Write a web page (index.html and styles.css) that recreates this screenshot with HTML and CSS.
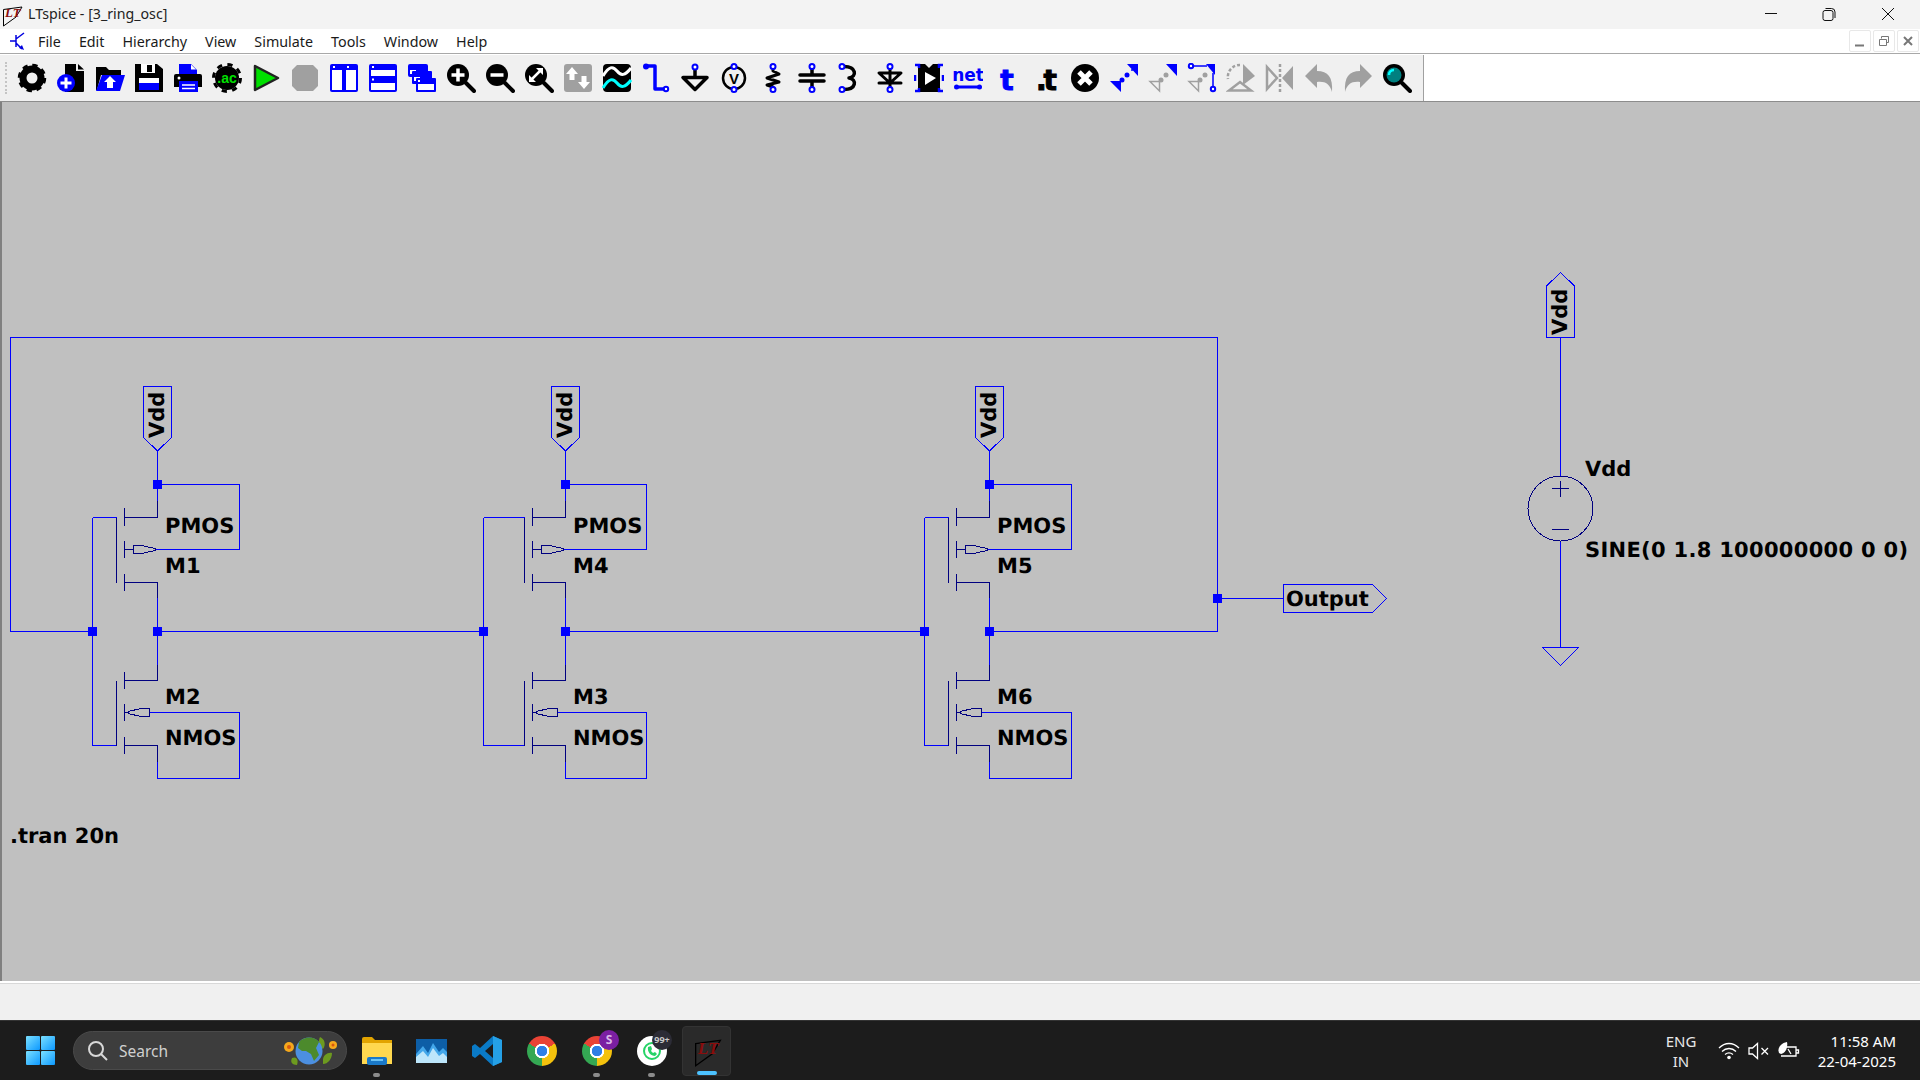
FILE: index.html
```html
<!DOCTYPE html>
<html lang="en">
<head>
    <meta charset="UTF-8">
    <title>LTspice - [3_ring_osc]</title>
    <link rel="stylesheet" href="styles.css">
</head>
<body>
    <header class="titlebar">
        <svg class="app-logo" width="22" height="24" viewBox="0 0 22 24">
            <path class="logo-line" d="M2.5 6.5L21 4L15 14L2.5 23Z"/>
            <text class="logo-text" x="4" y="14">LT</text>
        </svg>
        <span class="title-text">LTspice - [3_ring_osc]</span>
        <div class="window-btns">
            <svg width="58" height="29" viewBox="0 0 58 29"><path class="win-line" d="M22 13.500H34"/></svg>
            <svg width="58" height="29" viewBox="0 0 58 29"><path class="win-line" d="M22 12.500a2 2 0 0 1 2-2h6a2 2 0 0 1 2 2v6a2 2 0 0 1-2 2h-6a2 2 0 0 1-2-2ZM24.500 8.500h6a3.500 3.500 0 0 1 3.500 3.500v6"/></svg>
            <svg width="58" height="29" viewBox="0 0 58 29"><path class="win-line" d="M23 8L35 20M35 8L23 20"/></svg>
        </div>
    </header>

    <nav class="menubar">
        <svg class="menu-icon" width="18" height="20" viewBox="0 0 18 20">
            <path class="menu-icon-line" d="M1 10H7M7 4V16M7 8L15 2M7 12L13 18"/>
            <path class="menu-icon-arrow" d="M15 19L10 17L13 14Z"/>
        </svg>
        <a href="#">File</a>
        <a href="#">Edit</a>
        <a href="#">Hierarchy</a>
        <a href="#">View</a>
        <a href="#">Simulate</a>
        <a href="#">Tools</a>
        <a href="#">Window</a>
        <a href="#">Help</a>
        <div class="mdi-btns">
            <button class="mdi-btn"><svg width="12" height="12" viewBox="0 0 12 12"><path class="mdi-line" d="M1 10.500H10"/></svg></button>
            <button class="mdi-btn"><svg width="12" height="12" viewBox="0 0 12 12"><path class="mdi-line-thin" d="M3.500 3.500V1.500H10.500V7.500H8.500M1.500 4.500H8.500V10.500H1.500Z"/></svg></button>
            <button class="mdi-btn"><svg width="12" height="12" viewBox="0 0 12 12"><path class="mdi-line" d="M2 2L10 10M10 2L2 10"/></svg></button>
        </div>
    </nav>

    <div class="toolbar-row">
        <div class="toolbar">
            <div class="grip"></div>
            <!-- settings -->
            <div class="tool"><svg viewBox="0 0 30 30"><circle cx="15" cy="15" r="9" class="k-ring" stroke-width="7"/><circle cx="15" cy="15" r="12.500" class="k-ring" stroke-width="3.500" stroke-dasharray="5.200 4.600"/></svg></div>
            <!-- new schematic -->
            <div class="tool"><svg viewBox="0 0 30 30"><path d="M9 1H20V8H28V28a1 1 0 0 1-1 1H9Z"/><path d="M22 1L28 6.500H22Z"/><circle cx="10" cy="20" r="9" class="b"/><path class="w-line" stroke-width="3" d="M10 14.500V25.500M4.500 20H15.500"/></svg></div>
            <!-- open -->
            <div class="tool"><svg viewBox="0 0 30 30"><path d="M1 27V4H11L14 7H26V12H6L2 27Z"/><path class="b" d="M7 12H30L25 28H1Z"/><path class="w" d="M15 13L21 19H18V25H12V19H9Z"/></svg></div>
            <!-- save -->
            <div class="tool"><svg viewBox="0 0 30 30"><path d="M1 1H23L29 6V29H1Z"/><rect class="w" x="7" y="1" width="14" height="9"/><rect x="13" y="2" width="5" height="7"/><rect class="w" x="5" y="15" width="20" height="5"/><rect class="b" x="5" y="20" width="20" height="7"/></svg></div>
            <!-- print -->
            <div class="tool"><svg viewBox="0 0 30 30"><path class="b" d="M6 1H18L24 7V12H6Z"/><path class="w" d="M18 1.500L23 6.500H18Z"/><path d="M3 11H27a2 2 0 0 1 2 2V24H1V13a2 2 0 0 1 2-2Z"/><circle class="w" cx="6" cy="15" r="1.500"/><rect class="b" x="6" y="18" width="19" height="11"/><path class="w-line" stroke-width="1.500" d="M9 22H22M9 25.500H22"/></svg></div>
            <!-- ac analysis -->
            <div class="tool"><svg viewBox="0 0 30 30"><circle cx="15" cy="15" r="12"/><circle cx="15" cy="15" r="13.500" class="k-ring" stroke-width="3" stroke-dasharray="5.200 5.400"/><text class="ac-text" x="15" y="20">.ac</text></svg></div>
            <!-- run -->
            <div class="tool"><svg viewBox="0 0 30 30"><path class="run" d="M4 3L27 15L4 27Z"/></svg></div>
            <!-- halt -->
            <div class="tool"><svg viewBox="0 0 30 30"><path class="g" d="M7 2H23L28 7V23L23 28H7L2 23V7Z"/></svg></div>
            <!-- tile vertically -->
            <div class="tool"><svg viewBox="0 0 30 30"><rect class="b" x="1" y="1" width="28" height="28" rx="2"/><rect class="w" x="3" y="7" width="10" height="20"/><rect class="w" x="17" y="7" width="10" height="20"/><rect class="w" x="4" y="3" width="2" height="2"/><rect class="w" x="18" y="3" width="2" height="2"/></svg></div>
            <!-- tile horizontally -->
            <div class="tool"><svg viewBox="0 0 30 30"><rect class="b" x="1" y="1" width="28" height="28" rx="2"/><rect class="w" x="3" y="7" width="24" height="6"/><rect class="w" x="3" y="20" width="24" height="7"/><rect class="w" x="4" y="3" width="2" height="2"/><rect class="w" x="4" y="15.500" width="2" height="2"/></svg></div>
            <!-- cascade -->
            <div class="tool"><svg viewBox="0 0 30 30"><rect class="b" x="1" y="1" width="20" height="13" rx="2"/><rect class="w" x="3" y="7" width="6" height="4"/><rect class="b" x="5" y="8" width="20" height="13" rx="1"/><rect class="w" x="7" y="14" width="6" height="4"/><rect class="b" x="9" y="15" width="20" height="14" rx="1"/><rect class="w" x="11" y="21" width="16" height="6"/><rect class="w" x="11" y="17" width="2" height="2"/></svg></div>
            <!-- zoom in -->
            <div class="tool"><svg viewBox="0 0 30 30"><path class="k-line" stroke-width="4" d="M20 20L28 28"/><circle cx="12" cy="12" r="11"/><path class="w-line" stroke-width="3.500" d="M12 5.500V18.500M5.500 12H18.500"/></svg></div>
            <!-- zoom out -->
            <div class="tool"><svg viewBox="0 0 30 30"><path class="k-line" stroke-width="4" d="M20 20L28 28"/><circle cx="12" cy="12" r="11"/><path class="w-line" stroke-width="3.500" d="M5.500 12H18.500"/></svg></div>
            <!-- zoom fit -->
            <div class="tool"><svg viewBox="0 0 30 30"><path class="k-line" stroke-width="4" d="M20 20L28 28"/><circle cx="12" cy="12" r="11"/><path class="w-line" stroke-width="2.500" d="M7.500 16.500L16.500 7.500"/><path class="w" d="M12 5H19V12ZM5 12V19H12Z"/></svg></div>
            <!-- pan -->
            <div class="tool"><svg viewBox="0 0 30 30"><rect class="g" x="1" y="1" width="28" height="28" rx="3"/><path class="w" d="M9 4L15 11H11.500V17H6.500V11H3ZM21 26L15 19H18.500V13H23.500V19H27Z"/></svg></div>
            <!-- waveform -->
            <div class="tool"><svg viewBox="0 0 30 30"><rect x="1" y="1" width="28" height="28" rx="4"/><path class="wave-w" d="M1 13C7 3 11 3 15 8S23 13 29 5"/><path class="wave-c" d="M1 25C7 15 11 15 15 20S23 25 29 17"/></svg></div>
            <!-- wire -->
            <div class="tool"><svg viewBox="0 0 30 30"><path class="b-line" stroke-width="3.500" d="M6 3H14V26H24"/><circle class="b" cx="5" cy="3.500" r="3"/><circle class="pin" cx="25" cy="26" r="2.200"/></svg></div>
            <!-- ground -->
            <div class="tool"><svg viewBox="0 0 30 30"><path class="k-line" stroke-width="3.500" d="M15 6V14M3 14.500H27L15 26.500Z"/><circle class="pin" cx="15" cy="4" r="2.500"/></svg></div>
            <!-- label -->
            <div class="tool"><svg viewBox="0 0 30 30"><circle class="k-ring" stroke-width="2.500" cx="15" cy="15" r="11"/><text class="v-text" x="15" y="21">V</text><circle class="pin" cx="15" cy="3.500" r="2.500"/><circle class="pin" cx="15" cy="26.500" r="2.500"/></svg></div>
            <!-- resistor -->
            <div class="tool"><svg viewBox="0 0 30 30"><path class="k-line" stroke-width="3" d="M15 6V8L21 11L9 15L21 19L9 22L15 24"/><circle class="pin" cx="15" cy="3.500" r="2.500"/><circle class="pin" cx="15" cy="26.500" r="2.500"/></svg></div>
            <!-- capacitor -->
            <div class="tool"><svg viewBox="0 0 30 30"><path class="k-line" stroke-width="3.500" d="M15 6V12M15 18V24M3 12H27M3 18H27"/><circle class="pin" cx="15" cy="3.500" r="2.500"/><circle class="pin" cx="15" cy="26.500" r="2.500"/></svg></div>
            <!-- inductor -->
            <div class="tool"><svg viewBox="0 0 30 30"><path class="k-line" stroke-width="3.500" d="M7 3.500C21 3 21 14 13 15C21 16 21 27 7 26.500"/><circle class="pin" cx="6" cy="3.500" r="2.500"/><circle class="pin" cx="6" cy="26.500" r="2.500"/></svg></div>
            <!-- diode -->
            <div class="tool"><svg viewBox="0 0 30 30"><path class="k-line" stroke-width="3" d="M15 6V24M4 10H26L15 20ZM4 20H26"/><circle class="pin" cx="15" cy="3.500" r="2.500"/><circle class="pin" cx="15" cy="26.500" r="2.500"/></svg></div>
            <!-- component -->
            <div class="tool"><svg viewBox="0 0 30 30"><path d="M4 1H11L15 5L19 1H26V29H4Z"/><path class="w" d="M11 9L22 15L11 22Z"/><path class="dash" d="M1 2H5V5M29 2H25V5M1 12V18M29 12V18M1 28H5V25M29 28H25V25"/></svg></div>
            <!-- net name -->
            <div class="tool"><svg viewBox="0 0 30 30"><text class="net-text" x="15" y="18">net</text><path class="b-line" stroke-width="3" d="M3 24H27"/><circle class="b" cx="3.500" cy="24" r="2.500"/><circle class="b" cx="26.500" cy="24" r="2.500"/></svg></div>
            <!-- text -->
            <div class="tool"><svg class="tool-text" viewBox="0 0 30 30"><text class="t-text t-blue" x="15" y="27">t</text></svg></div>
            <!-- spice directive -->
            <div class="tool"><svg class="tool-text" viewBox="0 0 30 30"><text class="t-text t-dot" x="14" y="27">.t</text></svg></div>
            <!-- delete -->
            <div class="tool"><svg viewBox="0 0 30 30"><circle cx="15" cy="15" r="14"/><path class="w-line" stroke-width="5" d="M9 9L21 21M21 9L9 21"/></svg></div>
            <!-- move -->
            <div class="tool"><svg viewBox="0 0 30 30"><path class="b" d="M18 1H29V13ZM1 18H12V29Z"/><circle class="b" cx="18" cy="12" r="2.500"/><circle class="b" cx="13" cy="17" r="2.500"/><circle class="b" cx="23" cy="7" r="1"/></svg></div>
            <!-- drag -->
            <div class="tool"><svg viewBox="0 0 30 30"><path class="b" d="M18 1H29V13Z"/><path class="g-line" d="M2 18.500H11.500V28Z"/><circle class="g" cx="18" cy="12" r="2.500"/><circle class="g" cx="13" cy="17" r="2.500"/></svg></div>
            <!-- drag with wire -->
            <div class="tool"><svg viewBox="0 0 30 30"><path class="b" d="M19 1H28V12Z"/><path class="b-line" stroke-width="1.500" d="M6 3H20M26 10V24"/><circle class="pin" cx="4" cy="3" r="2.200"/><circle class="pin" cx="26" cy="26" r="2.200"/><path class="g-line" d="M2 18.500H11.500V28Z"/><circle class="g" cx="18" cy="12" r="2.500"/><circle class="g" cx="13" cy="17" r="2.500"/></svg></div>
            <!-- rotate -->
            <div class="tool"><svg viewBox="0 0 30 30"><path class="g" d="M17 1L29 13L17 22Z"/><path class="g-dots" d="M14 2A12 12 0 0 0 2 16"/><path class="g-fat" d="M3 27.500H25L14 19Z"/></svg></div>
            <!-- mirror -->
            <div class="tool"><svg viewBox="0 0 30 30"><path class="g-fat" d="M2 4V26L12 15Z"/><path class="g" d="M28 3V27L17 15Z"/><path class="g-dots" d="M15 1V29"/></svg></div>
            <!-- undo -->
            <div class="tool"><svg viewBox="0 0 30 30"><path class="g" d="M13 1V8C24 8 29 14 28 29C26 21 21 18 13 19V25L1 13Z"/></svg></div>
            <!-- redo -->
            <div class="tool"><svg viewBox="0 0 30 30"><path class="g" d="M17 1V8C6 8 1 14 2 29C4 21 9 18 17 19V25L29 13Z"/></svg></div>
            <!-- find -->
            <div class="tool"><svg viewBox="0 0 30 30"><path class="k-line" stroke-width="4" d="M20 20L28 28"/><circle cx="12" cy="12" r="11"/><circle cx="12" cy="12" r="7.500" class="teal"/><path class="cyan-line" d="M7 12C7 9 9 7 12 7"/></svg></div>
        </div>
    </div>

    <main class="canvas">
        <svg class="schematic" width="1918" height="879" viewBox="2 102 1918 879">
            <defs>
                <g id="pmos">
                    <path class="sym" d="M124.500 508V526M124.500 541V558M124.500 574V591M116.500 517.500V582.500M124.500 517.500H157.500V501M124.500 582.500H157.500V598M124.500 549.500H133.500"/>
                    <path class="sym" d="M133.500 545.500H141.500L155 548.500V550.500L141.500 553.500H133.500Z"/>
                </g>
                <g id="nmos">
                    <path class="sym" d="M124.500 672V689M124.500 704V721M124.500 737V754M116.500 680.500V745.500M124.500 680.500H157.500V664.500M124.500 745.500H157.500V761.500M124.500 712.500H128"/>
                    <path class="sym" d="M149.500 708.500H141L128 711.500V713.500L141 716.500H149.500Z"/>
                </g>
                <path id="vdd-pin" class="flag" d="M143.500 386.500H171.500V437.500L157.500 451L143.500 437.500Z"/>
                <rect id="dot" x="-4.500" y="-4.500" width="9" height="9"/>
            </defs>

            <!-- feedback loop and main net -->
            <path class="wire" d="M92.500 631.500H10.500V337.500H1217.500V631.500H989.500M924.500 631.500H565.500M483.500 631.500H157.500M1217.500 598.500H1283.500"/>

            <!-- M1 / M2 -->
            <path class="wire" d="M157.500 451V501M157.500 484.500H239.500V549.500H155M157.500 598V664.500M92.500 517.500V745.500H116.500M92.500 517.500H116.500M157.500 761.500V778.500H239.500V712.500H149.500"/>
            <use href="#vdd-pin"/><use href="#pmos"/><use href="#nmos"/>

            <!-- M4 / M3 -->
            <path class="wire" d="M565.500 451V501M565.500 484.500H646.500V549.500H563M565.500 598V664.500M483.500 517.500V745.500H524.500M483.500 517.500H524.500M565.500 761.500V778.500H646.500V712.500H557.500"/>
            <use href="#vdd-pin" x="408"/><use href="#pmos" x="408"/><use href="#nmos" x="408"/>

            <!-- M5 / M6 -->
            <path class="wire" d="M989.500 451V501M989.500 484.500H1071.500V549.500H987M989.500 598V664.500M924.500 517.500V745.500H948.500M924.500 517.500H948.500M989.500 761.500V778.500H1071.500V712.500H981.500"/>
            <use href="#vdd-pin" x="832"/><use href="#pmos" x="832"/><use href="#nmos" x="832"/>

            <!-- junctions -->
            <use class="dot" href="#dot" x="157.500" y="484.500"/>
            <use class="dot" href="#dot" x="92.500" y="631.500"/>
            <use class="dot" href="#dot" x="157.500" y="631.500"/>
            <use class="dot" href="#dot" x="565.500" y="484.500"/>
            <use class="dot" href="#dot" x="483.500" y="631.500"/>
            <use class="dot" href="#dot" x="565.500" y="631.500"/>
            <use class="dot" href="#dot" x="989.500" y="484.500"/>
            <use class="dot" href="#dot" x="924.500" y="631.500"/>
            <use class="dot" href="#dot" x="989.500" y="631.500"/>
            <use class="dot" href="#dot" x="1217.500" y="598.500"/>

            <!-- output flag -->
            <path class="flag" d="M1283.500 584.500H1372.500L1386.500 598.500L1372.500 612.500H1283.500Z"/>

            <!-- voltage source -->
            <path class="flag" d="M1546.500 337.500V286L1560.500 272.500L1574.500 286V337.500Z"/>
            <path class="wire" d="M1560.500 337.500V476M1560.500 541V647.500"/>
            <circle class="sym-blue" cx="1560.500" cy="508.500" r="32.500"/>
            <path class="sym-blue" d="M1552 488.500H1569M1560.500 480.500V497M1552 529.500H1569"/>
            <path class="flag" d="M1542.500 647.500H1578.500L1560.500 665.500Z"/>

            <!-- labels -->
            <text class="sch-text" x="165" y="532.500">PMOS</text>
            <text class="sch-text" x="165" y="572.500">M1</text>
            <text class="sch-text" x="165" y="704">M2</text>
            <text class="sch-text" x="165" y="745">NMOS</text>
            <text class="sch-text" x="573" y="532.500">PMOS</text>
            <text class="sch-text" x="573" y="572.500">M4</text>
            <text class="sch-text" x="573" y="704">M3</text>
            <text class="sch-text" x="573" y="745">NMOS</text>
            <text class="sch-text" x="997" y="532.500">PMOS</text>
            <text class="sch-text" x="997" y="572.500">M5</text>
            <text class="sch-text" x="997" y="704">M6</text>
            <text class="sch-text" x="997" y="745">NMOS</text>
            <text class="sch-text" transform="translate(164 438) rotate(-90)">Vdd</text>
            <text class="sch-text" transform="translate(572 438) rotate(-90)">Vdd</text>
            <text class="sch-text" transform="translate(996 438) rotate(-90)">Vdd</text>
            <text class="sch-text" transform="translate(1566.500 335) rotate(-90)">Vdd</text>
            <text class="sch-text" x="1286" y="606">Output</text>
            <text class="sch-text" x="1585" y="475.500">Vdd</text>
            <text class="sch-text sine-text" x="1585" y="557">SINE(0 1.8 100000000 0 0)</text>
            <text class="sch-text" x="10" y="843">.tran 20n</text>
        </svg>
    </main>

    <div class="statusbar"></div>

    <footer class="taskbar">
        <svg class="start" width="29" height="29" viewBox="0 0 29 29">
            <defs>
                <linearGradient id="win" x1="0" y1="0" x2="1" y2="1">
                    <stop offset="0" stop-color="#7be0ff"/>
                    <stop offset="1" stop-color="#0c98ff"/>
                </linearGradient>
            </defs>
            <rect x="0" y="0" width="14" height="14" rx="1" fill="url(#win)"/>
            <rect x="15" y="0" width="14" height="14" rx="1" fill="url(#win)"/>
            <rect x="0" y="15" width="14" height="14" rx="1" fill="url(#win)"/>
            <rect x="15" y="15" width="14" height="14" rx="1" fill="url(#win)"/>
        </svg>

        <div class="search">
            <svg width="22" height="22" viewBox="0 0 22 22"><circle class="search-line" cx="9" cy="9" r="7"/><path class="search-line" d="M14 14L20 20"/></svg>
            <span>Search</span>
            <svg class="globe" width="56" height="30" viewBox="0 0 56 30">
                <path fill="#6d9a1f" d="M10 22C14 20 17 23 15 29C10 29 8 26 10 22ZM41 24C41 19 46 16 50 17C50 23 46 28 41 28ZM38 1C43 3 44 9 41 13C37 10 36 5 38 1Z"/>
                <circle cx="7" cy="11" r="5" fill="#f5a81c"/><circle cx="7" cy="11" r="2" fill="#d9570f"/>
                <circle cx="51" cy="9" r="4" fill="#f5a81c"/><circle cx="51" cy="9" r="1.500" fill="#d9570f"/>
                <circle cx="27" cy="15" r="13.500" fill="#4c8fe0"/>
                <path fill="#4c8a2c" d="M17 6C22 0 33 0 37 6L34 12L37 19L32 25L29 18L24 15L20 15L16 12Z"/>
            </svg>
        </div>

        <div class="app">
            <svg width="30" height="28" viewBox="0 0 30 28"><path fill="#e2a400" d="M0 2a2 2 0 0 1 2-2H10L14 4H0Z"/><path fill="#e2a400" d="M0 3H30V27H0Z"/><path fill="#ffd84f" d="M0 6H30V27H0Z"/><rect x="5" y="20" width="20" height="8" fill="#1a79c9" rx="2"/><rect x="9" y="22" width="12" height="2" fill="#6cc3f5"/></svg>
            <span class="app-dot"></span>
        </div>
        <div class="app">
            <svg width="31" height="24" viewBox="0 0 31 24"><rect width="31" height="24" fill="#0d5ea6"/><path fill="#43a7ea" d="M0 15L7 7L12 14L17 4L23 13L27 9L31 13V24H0Z"/><path fill="#bde6fb" d="M0 18L7 12L12 18L17 9L23 17L27 14L31 18V24H0Z"/></svg>
        </div>
        <div class="app">
            <svg width="30" height="30" viewBox="0 0 30 30"><path fill="#0a7ac6" d="M21 0L30 4V26L21 30L8 18L3 22L0 20V10L3 8L8 12ZM21 8L13 15L21 22Z"/><path fill="#25a0e6" d="M21 0L30 4V26L21 30Z"/></svg>
        </div>
        <div class="app"><div class="chrome"></div></div>
        <div class="app">
            <div class="chrome"></div>
            <span class="badge-s">S</span>
            <span class="app-dot"></span>
        </div>
        <div class="app">
            <svg width="30" height="30" viewBox="0 0 30 30"><circle cx="15" cy="15" r="15" fill="#fff"/><circle cx="15" cy="15" r="8" fill="none" stroke="#25d366" stroke-width="2"/><path fill="#25d366" d="M11 11L14 10L15 13L14 15L16 17L18 16L20 18L18 20C14 20 10 16 11 11Z"/></svg>
            <span class="badge-wa">99+</span>
            <span class="app-dot"></span>
        </div>
        <div class="app app-active">
            <svg width="32" height="32" viewBox="0 0 22 24"><path class="logo-line" d="M2.500 6.500L21 4L15 14L2.500 23Z"/><text class="logo-text" x="4" y="14">LT</text></svg>
            <span class="app-bar"></span>
        </div>

        <div class="tray">
            <div class="lang">ENG<br>IN</div>
            <svg width="22" height="18" viewBox="0 0 22 18"><path class="tray-line" d="M1 6C7 0 15 0 21 6M4 9.500C8 5.500 14 5.500 18 9.500M7 12.500C9.500 10.500 12.500 10.500 15 12.500"/><circle cx="11" cy="15.500" r="1.800" fill="#fff"/></svg>
            <svg width="22" height="18" viewBox="0 0 22 18"><path class="tray-line" d="M1 6H4.500L9.500 1.500V16.500L4.500 12H1ZM13.500 6L20 12.500M20 6L13.500 12.500"/></svg>
            <svg width="22" height="18" viewBox="0 0 22 18"><path class="tray-line" d="M8 5H18V14H3M18 8H20.500V11H18M10 7L13 12"/><path fill="#fff" d="M1 11C-1 6 3 1 9 0C10 5 8 11 3 12Z"/></svg>
            <div class="clock">11:58 AM<br>22-04-2025</div>
        </div>
    </footer>
</body>
</html>
```

FILE: styles.css
```css
* {
    box-sizing: border-box;
}

body {
    margin: 0;
    width: 1920px;
    height: 1080px;
    overflow: hidden;
    display: flex;
    flex-direction: column;
    font-family: "Noto Sans", "Open Sans", sans-serif;
    color: #000;
    background: #f0f0f0;
}

/* title bar */
.titlebar {
    height: 29px;
    display: flex;
    align-items: center;
    background: #f3f3f3;
    font-size: 14.200px;
    color: #222;
}

.title-text {
    padding-bottom: 2px;
}

.app-logo {
    margin-left: 1px;
    margin-right: 5px;
}

.logo-line {
    fill: none;
    stroke: #000;
    stroke-width: 1;
}

.logo-text {
    font: italic bold 13px "Liberation Serif", serif;
    fill: #8a0d0d;
}

.window-btns {
    margin-left: auto;
    display: flex;
    padding-right: 3px;
}

.win-line {
    fill: none;
    stroke: #111;
    stroke-width: 1;
}

/* menu bar */
.menubar {
    height: 25px;
    display: flex;
    align-items: center;
    gap: 18px;
    background: #fff;
    border-bottom: 1px solid #a8a8a8;
    font-size: 14.300px;
    position: relative;
}

.menubar a {
    color: #1a1a1a;
    text-decoration: none;
}

.menu-icon {
    margin-left: 9px;
    margin-right: -7px;
}

.menu-icon-line {
    fill: none;
    stroke: #0000e0;
    stroke-width: 1.500;
}

.menu-icon-arrow {
    fill: #0000e0;
}

.mdi-btns {
    margin-left: auto;
    display: flex;
    gap: 2px;
    padding-right: 1px;
}

.mdi-btn {
    width: 22px;
    height: 22px;
    padding: 0;
    background: #fff;
    border: 1px solid #e8e8e8;
    border-radius: 2px;
    display: flex;
    align-items: center;
    justify-content: center;
}

.mdi-line {
    fill: none;
    stroke: #777;
    stroke-width: 2;
}

.mdi-line-thin {
    fill: none;
    stroke: #777;
    stroke-width: 1;
}

/* toolbar */
.toolbar-row {
    height: 48px;
    background: #fff;
    border-bottom: 1px solid #8c8c8c;
    border-top: 1px solid #fff;
}

.toolbar {
    width: 1424px;
    height: 46px;
    display: flex;
    align-items: center;
    background: #f0f0f0;
    border-right: 1px solid #a0a0a0;
}

.grip {
    width: 13px;
    height: 32px;
    margin-left: 5px;
    margin-right: -6px;
    border-left: 2px dotted #c4c4c4;
}

.tool {
    width: 39px;
    flex: none;
    display: flex;
    justify-content: center;
}

.tool svg {
    width: 30px;
    height: 30px;
    display: block;
}

.tool .tool-text {
    overflow: visible;
}

.b { fill: #0000ff; }
.w { fill: #fff; }
.g { fill: #a0a0a0; }
.teal { fill: #008080; }

.k-ring { fill: none; stroke: #000; }
.k-line { fill: none; stroke: #000; stroke-linecap: round; stroke-linejoin: round; }
.w-line { fill: none; stroke: #fff; }
.b-line { fill: none; stroke: #0000ff; stroke-linejoin: round; }
.g-line { fill: none; stroke: #a0a0a0; stroke-width: 1.500; }
.g-fat { fill: none; stroke: #a0a0a0; stroke-width: 2.500; }
.g-dots { fill: none; stroke: #a0a0a0; stroke-width: 2.500; stroke-dasharray: 3 2; }
.cyan-line { fill: none; stroke: #00ffff; stroke-width: 2.500; }
.pin { fill: #fff; stroke: #0000ff; stroke-width: 2; }
.dash { fill: none; stroke: #0000ff; stroke-width: 2.500; }
.run { fill: #00e000; stroke: #222; stroke-width: 2.500; stroke-linejoin: round; }
.wave-w { fill: none; stroke: #fff; stroke-width: 3; }
.wave-c { fill: none; stroke: #00ffff; stroke-width: 3; }

.ac-text {
    font: bold 14px "Liberation Sans", sans-serif;
    fill: #00e000;
    text-anchor: middle;
}

.v-text {
    font: bold 15px "Liberation Sans", sans-serif;
    text-anchor: middle;
}

.net-text {
    font: bold 17px "DejaVu Sans", sans-serif;
    fill: #0000ff;
    text-anchor: middle;
}

.t-text {
    font: bold 28px "DejaVu Sans", sans-serif;
    text-anchor: middle;
    stroke: #000;
    stroke-width: 1;
}

.t-blue {
    fill: #0000ff;
    stroke: #0000ff;
}

.t-dot {
    letter-spacing: -3px;
}

/* schematic */
.canvas {
    height: 879px;
    background: #c0c0c0;
    border-left: 2px solid #808080;
    overflow: hidden;
}

.schematic {
    display: block;
    shape-rendering: crispEdges;
}

.wire {
    fill: none;
    stroke: #0000ff;
    stroke-width: 1;
}

.sym {
    fill: none;
    stroke: #000080;
    stroke-width: 1;
}

.sym-blue {
    fill: none;
    stroke: #000080;
    stroke-width: 1;
}

.flag {
    fill: none;
    stroke: #0000ff;
    stroke-width: 1;
}

.dot {
    fill: #0000ff;
}

.sch-text {
    font: bold 21px "DejaVu Sans", sans-serif;
    fill: #000;
    text-rendering: geometricPrecision;
}

.sine-text {
    letter-spacing: 0.300px;
}

/* status bar */
.statusbar {
    height: 39px;
    background: #f0f0f0;
    border-top: 2px solid #fff;
    box-shadow: inset 0 1px 0 #d8d8d8;
}

/* taskbar */
.taskbar {
    height: 60px;
    display: flex;
    align-items: center;
    background: #1c1c1c;
    border-top: 1px solid #333;
}

.start {
    margin-left: 26px;
}

.search {
    width: 274px;
    height: 39px;
    margin-left: 18px;
    margin-right: 2px;
    padding-left: 13px;
    display: flex;
    align-items: center;
    gap: 10px;
    background: #3d3d3d;
    border: 1px solid #4a4a4a;
    border-radius: 20px;
    color: #d0d0d0;
    font-size: 15.500px;
    position: relative;
}

.search-line {
    fill: none;
    stroke: #d8d8d8;
    stroke-width: 2;
}

.globe {
    position: absolute;
    right: 8px;
    top: 4px;
}

.app {
    width: 55px;
    height: 50px;
    flex: none;
    position: relative;
    display: flex;
    align-items: center;
    justify-content: center;
}

.app-active {
    background: #2a2a2a;
    border: 1px solid #333;
    border-radius: 4px;
    width: 49px;
    margin: 0 3px;
}

.app-dot {
    position: absolute;
    left: 24px;
    bottom: -1px;
    width: 7px;
    height: 4px;
    border-radius: 2px;
    background: #8c8c8c;
}

.app-bar {
    position: absolute;
    left: 14px;
    bottom: 0;
    width: 20px;
    height: 4px;
    border-radius: 2px;
    background: #4cc2ff;
}

.chrome {
    width: 30px;
    height: 30px;
    border-radius: 50%;
    background:
        radial-gradient(circle, #2f7fe6 0 5px, #fff 5.500px 7px, transparent 7.500px),
        conic-gradient(from 60deg, #f4c20d 0 120deg, #34a853 120deg 240deg, #ea4335 240deg 360deg);
}

.badge-s {
    position: absolute;
    left: 30px;
    top: 4px;
    width: 20px;
    height: 20px;
    border-radius: 50%;
    background: #7b1fa2;
    color: #d9b8e8;
    font-size: 12px;
    font-weight: 700;
    text-align: center;
    line-height: 20px;
}

.badge-wa {
    position: absolute;
    left: 28px;
    top: 4px;
    width: 20px;
    height: 20px;
    border-radius: 50%;
    background: #2c2c36;
    color: #c8c8c8;
    font-size: 9px;
    font-weight: 700;
    text-align: center;
    line-height: 20px;
}

.tray {
    margin-left: auto;
    padding-right: 24px;
    display: flex;
    align-items: center;
    color: #e8e8e8;
    font-size: 15px;
    line-height: 20px;
}

.lang {
    width: 40px;
    margin-right: 17px;
    text-align: center;
}

.tray svg {
    margin-right: 8px;
}

.tray-line {
    fill: none;
    stroke: #fff;
    stroke-width: 1.300;
}

.clock {
    width: 86px;
    margin-left: 2px;
    text-align: right;
    color: #fff;
}
```
